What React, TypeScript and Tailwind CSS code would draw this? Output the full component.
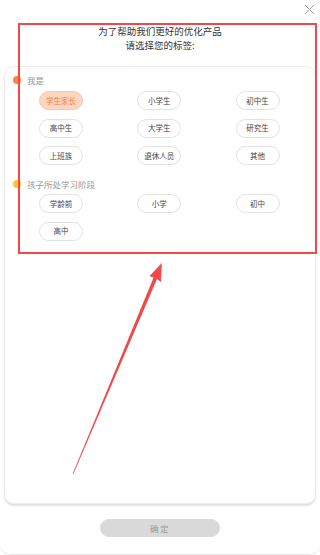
import React, { useState } from "react";

const roles = ["学生家长", "小学生", "初中生", "高中生", "大学生", "研究生", "上班族", "退休人员", "其他"];
const stages = ["学龄前", "小学", "初中", "高中"];

const Chip: React.FC<{ label: string; active: boolean; onClick: () => void }> = ({ label, active, onClick }) => (
	<button
		onClick={onClick}
		className={
			active
				? "w-[44px] h-[19px] rounded-full border border-[#fcc6a9] bg-[#fdd6c2] text-[#f57b46] text-[7.5px] leading-none flex items-center justify-center"
				: "w-[44px] h-[19px] rounded-full border border-[#e2e2e2] bg-white text-[#444] text-[7.5px] leading-none flex items-center justify-center"
		}
	>
		{label}
	</button>
);

const App: React.FC = () => {
	const [role, setRole] = useState("学生家长");
	const [stage, setStage] = useState("");

	return (
		<div
			className="relative w-[320px] h-[555px] bg-white overflow-hidden rounded-b-[10px] border-b border-[#e4e4e4] flex flex-col"
			style={{ fontFamily: '"Noto Sans CJK SC", "Noto Sans", sans-serif' }}
		>
			{/* close */}
			<button className="absolute right-[5px] top-[4px] w-[11px] h-[11px]" aria-label="close">
				<svg viewBox="0 0 11 11" className="w-[11px] h-[11px]" stroke="#a0a0a0" strokeWidth="1">
					<path d="M1 1L10 10M10 1L1 10" />
				</svg>
			</button>

			<div className="pt-[24px] text-center text-[9.5px] leading-[14px] text-[#333]">
				<p>为了帮助我们更好的优化产品</p>
				<p>请选择您的标签:</p>
			</div>

			<div className="mt-[14px] mx-[4px] h-[438px] rounded-[10px] border border-[#ececec] shadow-[0_2px_2px_rgba(0,0,0,0.12)] pt-[7px]">
				<div className="flex items-center pl-[8px] gap-[6px] h-[12px]">
					<span className="w-[8px] h-[8px] rounded-full bg-[#f9834a]" />
					<span className="text-[8.5px] text-[#999]">我是</span>
				</div>
				<div className="mt-[5px] pl-[34px] grid grid-cols-[repeat(3,98.3px)] gap-y-[8.5px]">
					{roles.map((r) => (
						<Chip key={r} label={r} active={role === r} onClick={() => setRole(r)} />
					))}
				</div>

				<div className="mt-[13px] flex items-center pl-[8px] gap-[6px] h-[12px]">
					<span className="w-[8px] h-[8px] rounded-full bg-[#fbc531]" />
					<span className="text-[8.5px] text-[#999]">孩子所处学习阶段</span>
				</div>
				<div className="mt-[4px] pl-[34px] grid grid-cols-[repeat(3,98.3px)] gap-y-[8.5px]">
					{stages.map((s) => (
						<Chip key={s} label={s} active={stage === s} onClick={() => setStage(s)} />
					))}
				</div>
			</div>

			<button className="mt-[15px] mx-auto w-[120px] h-[18px] rounded-full bg-[#d9d9d9] text-[#999] text-[8.5px] tracking-[1.5px] leading-none">
				确定
			</button>

			{/* annotation overlay */}
			<div className="absolute left-[18px] top-[23px] w-[299px] h-[231px] border-2 border-[#f24848] pointer-events-none" />
			<svg className="absolute left-0 top-0 pointer-events-none" width="320" height="555" viewBox="0 0 320 555">
				<polygon
					fill="#f24848"
					points="161.8,263 161,282 157,279 73.4,474.1 72.6,473.9 153.6,277.5 149.4,276.3"
				/>
			</svg>
		</div>
	);
};

export default App;
